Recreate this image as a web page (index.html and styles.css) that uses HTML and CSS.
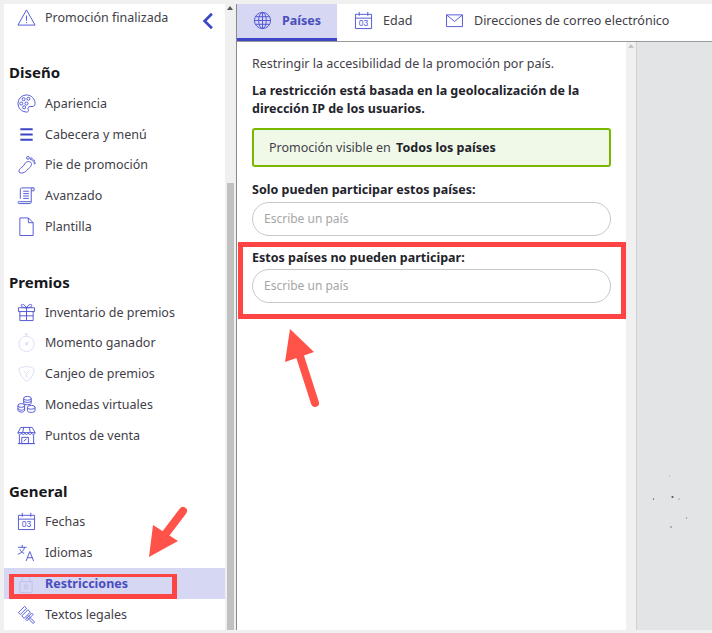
FILE: index.html
```html
<!DOCTYPE html>
<html lang="es">
<head>
<meta charset="utf-8">
<title>Restricciones</title>
<link rel="stylesheet" href="styles.css">
</head>
<body>
<div class="app">
  <aside class="sidebar">
    <nav class="nav">
      <a class="item first">
        <svg class="icon" viewBox="0 0 20 20"><path d="M10 2 1 18h18z"/><path d="M10 8v5.500M10 14.800v1.200"/></svg>
        <span>Promoción finalizada</span>
        <svg class="chevron" viewBox="0 0 10 16"><path d="M8.500 1.500 2 8l6.500 6.500"/></svg>
      </a>
      <h2 class="head head-diseno">Diseño</h2>
      <a class="item"><svg class="icon" viewBox="0 0 20 20"><path d="M10 1a9 9 0 1 0 0 18c2 0 2.500-1.500 1.800-2.800-.8-1.500.2-3 1.900-3H16c2 0 3-1.300 3-3.200C19 5 15 1 10 1z"/><circle cx="7" cy="5.500" r="1.600"/><circle cx="12" cy="5" r="1.600"/><circle cx="4.500" cy="10" r="1.600"/><circle cx="7.500" cy="14" r="1.600"/><circle cx="10" cy="10" r="1.600"/></svg><span>Apariencia</span></a>
      <a class="item"><svg class="icon" viewBox="0 0 20 20"><path class="thick" d="M3.500 4.500h13M3.500 10h13M3.500 15.500h13"/></svg><span>Cabecera y menú</span></a>
      <a class="item"><svg class="icon" viewBox="0 0 20 20"><path d="M11 7c3-.5 5 1 4 4-.8 2.300-3 3-4.500 5-1.500 2-3.500 3-6 3-2.200 0-3.200-1.500-2-3.500C4 13 6 13 7.500 10.500 8.500 8.500 9 7.500 11 7z"/><circle cx="11.500" cy="3" r="1.500"/><circle cx="15" cy="4" r="1.100"/><circle cx="17.500" cy="6" r=".9"/><circle cx="18.500" cy="8.500" r=".8"/></svg><span>Pie de promoción</span></a>
      <a class="item"><svg class="icon" viewBox="0 0 20 20"><path d="M5 2h13v3h-3v11.500H2.500M5 2c-1.200 0-1.500 1-1.500 2v9.500M15 5V3.500C15 2.500 15.500 2 16.500 2M2 18.500h11.500c1 0 1.500-.8 1.500-2M2 18.500c-1 0-1.500-2.500.5-2.500"/><path d="M6.500 5.500h6M6.500 8h6M6.500 10.500h6M6.500 13h6"/></svg><span>Avanzado</span></a>
      <a class="item"><svg class="icon" viewBox="0 0 20 20"><path d="M3 1h9l5 5v13.500H3zM12 1v5h5"/></svg><span>Plantilla</span></a>

      <h2 class="head head-premios">Premios</h2>
      <a class="item"><svg class="icon" viewBox="0 0 20 20"><path d="M1.500 5h17v4h-17zM3 9v9.500h14V9M10 5v13.500M3 13.500h14M10 5C8 1 4 .5 4.500 3c.3 1.500 3 2 5.500 2 2.500 0 5.200-.5 5.500-2C16 .5 12 1 10 5z"/></svg><span>Inventario de premios</span></a>
      <a class="item"><svg class="icon faded" viewBox="0 0 20 20"><circle cx="10" cy="11.500" r="8"/><path d="M8 1h4M10 1v2.500M9 12.500l3.500-4"/><circle cx="10" cy="11.500" r="1.200"/></svg><span>Momento ganador</span></a>
      <a class="item"><svg class="icon faded" viewBox="0 0 20 20"><path d="M2 5c4-3 12-3 16 0-.5 6-3 11-8 13C6 16 3 11 2 5z"/><path d="M7 7l3 3 3-3M10 10v4"/></svg><span>Canjeo de premios</span></a>
      <a class="item"><svg class="icon" viewBox="0 0 20 20"><ellipse cx="11" cy="3.500" rx="4" ry="2"/><path d="M7 3.500v5c0 1 1.800 1.800 4 1.800s4-.8 4-1.800v-5M7 6c0 1 1.800 1.800 4 1.800S15 7 15 6"/><ellipse cx="4.500" cy="11" rx="3.500" ry="2"/><path d="M1 11v5c0 1 1.500 2 3.500 2S8 17 8 16v-5M1 14c0 1 1.500 2 3.500 2S8 15 8 14"/><ellipse cx="15" cy="13" rx="4" ry="2"/><path d="M11 13v3.500c0 1 1.800 1.800 4 1.800s4-.8 4-1.800V13"/></svg><span>Monedas virtuales</span></a>
      <a class="item"><svg class="icon" viewBox="0 0 20 20"><path d="M4 1.500h12l3 5.500H1zM1 7c0 2.500 3.600 2.500 3.600 0 0 2.500 3.600 2.500 3.600 0 0 2.500 3.600 2.500 3.600 0 0 2.500 3.600 2.500 3.600 0 0 2.500 3.600 2.500 3.600 0M2.500 9.500v9h15v-9M1 18.500h18M7 1.500 6 7M13 1.500l1 5.500M5 12h7v6.500H5zM7 16l3-2.500"/></svg><span>Puntos de venta</span></a>

      <h2 class="head head-general">General</h2>
      <a class="item"><svg class="icon" viewBox="0 0 20 20"><path d="M1.500 3.500h17v15h-17zM1.500 7.500h17M5.500 1v4M14.500 1v4"/><text x="10" y="16.300" text-anchor="middle" class="cal-text">03</text></svg><span>Fechas</span></a>
      <a class="item"><svg class="icon" viewBox="0 0 20 20"><path d="M1 4.500h9M5.500 2v2.500M8 4.500c-.7 3.500-3.500 6-7 7.500M3 6.500c.8 2.300 2.500 3.700 4.500 4.500M9.500 19l4-10 4 10M11 15.500h5.500"/></svg><span>Idiomas</span></a>
      <a class="item active"><svg class="icon faded-lock" viewBox="0 0 20 20"><path d="M3 8h13v11.500H3zM5.500 8V5c0-5 8-5 8 0v3"/><path d="M8 11.500h3v4H8z"/></svg><span>Restricciones</span></a>
      <a class="item"><svg class="icon" viewBox="0 0 20 20"><path d="M1.500 8 8 1.500l2 2L3.500 10zM5 11.500 11.500 5l2.500 2.500L7.500 14zM9 15l6.500-6.500 1.500 1.500-6.500 6.500zM11.500 11l7 7-1.500 1.500-7-7"/></svg><span>Textos legales</span></a>
    </nav>
    <div class="scrollbar">
      <div class="arrow"></div>
      <div class="thumb"></div>
    </div>
  </aside>

  <main class="main">
    <div class="tabs">
      <a class="tab tab-active"><svg class="icon" viewBox="0 0 20 20"><circle cx="10" cy="10" r="8.500"/><ellipse cx="10" cy="10" rx="4" ry="8.500"/><path d="M10 1.500v17M1.500 10h17M2.700 6h14.600M2.700 14h14.600"/></svg><span>Países</span></a>
      <a class="tab tab-edad"><svg class="icon" viewBox="0 0 20 20"><path d="M1.500 3.500h17v15h-17zM1.500 7.500h17M5.500 1v4M14.500 1v4"/><text x="10" y="16.300" text-anchor="middle" class="cal-text">03</text></svg><span>Edad</span></a>
      <a class="tab tab-mail"><svg class="icon mail" viewBox="0 0 20 16"><path d="M1.500 2h17v12.500h-17zM1.500 2 10 9l8.500-7"/></svg><span>Direcciones de correo electrónico</span></a>
    </div>
    <div class="body">
      <section class="content">
        <p class="line">Restringir la accesibilidad de la promoción por país.</p>
        <p class="note">La restricción está basada en la geolocalización de la dirección IP de los usuarios.</p>
        <div class="status"><span>Promoción visible en <b>Todos los países</b></span></div>
        <label class="label label-first">Solo pueden participar estos países:</label>
        <div class="input">Escribe un país</div>
        <label class="label label-second">Estos países no pueden participar:</label>
        <div class="input">Escribe un país</div>
      </section>
      <div class="scrollbar inner"><div class="arrow light"></div></div>
      <div class="canvas"></div>
    </div>
  </main>
</div>

<div class="mark mark-form"></div>
<div class="mark mark-nav"></div>
<svg class="annot" viewBox="0 0 712 633">
  <path class="shaft" d="M315 403 298 350"/>
  <path class="head-fill" d="M290 329 285 362 314 352z"/>
  <path class="shaft" d="M183 511 164 536"/>
  <path class="head-fill" d="M149 557 153 525 178 541z"/>
  <g class="specks">
    <circle cx="672.500" cy="497" r="1.100"/><circle cx="653.500" cy="499" r=".7"/><circle cx="679" cy="499" r=".5"/>
    <circle cx="686.500" cy="518" r=".6"/><circle cx="671" cy="527" r=".7"/><circle cx="669.500" cy="476" r=".4"/>
  </g>
</svg>
</body>
</html>
```
FILE: styles.css
```css
* { box-sizing: border-box; }
html, body { margin: 0; height: 100%; }
body {
  width: 712px;
  height: 633px;
  overflow: hidden;
  position: relative;
  background: #f0f0f0;
  font-family: "Noto Sans", sans-serif;
  font-size: 12.5px;
  color: #3f4048;
}
.app {
  display: flex;
  height: 630px;
  padding: 4px 0 0 4px;
}
.sidebar { display: flex; width: 232px; flex: none; }
.nav {
  width: 221px;
  background: #fff;
  display: flex;
  flex-direction: column;
}
.item {
  height: 30.75px;
  flex: none;
  display: flex;
  align-items: center;
  padding-left: 13px;
  gap: 9px;
  position: relative;
}
.item.first { height: 26.5px; margin-bottom: 27.500px; }
.item.active { background: #d5d7f3; color: #4a4dbd; font-weight: 700; }
.icon {
  width: 19px;
  height: 19px;
  flex: none;
  fill: none;
  stroke: #4f55d4;
  stroke-width: 1;
  overflow: visible;
}
.icon .thick { stroke-width: 2; stroke: #3b45c8; }
.icon.faded { stroke: #d9dbf6; }
.icon.faded-lock { stroke: #bfc2ec; }
.chevron {
  position: absolute;
  left: 198px;
  top: 8px;
  width: 12px;
  height: 18px;
  fill: none;
  stroke: #3b48c4;
  stroke-width: 2.400;
}
.head {
  height: 30px;
  flex: none;
  margin: 0;
  padding-left: 5px;
  display: flex;
  align-items: center;
  font-size: 15px;
  font-weight: 700;
  color: #17171c;
}
.head-diseno { padding-bottom: 2px; }
.head-premios { margin-top: 25px; padding-top: 1px; }
.head-general { margin-top: 26px; padding-bottom: 2px; }
.scrollbar {
  width: 11px;
  background: #f0f0f0;
  position: relative;
  flex: none;
}
.arrow {
  position: absolute;
  left: 2px;
  top: 2px;
  border-left: 3.500px solid transparent;
  border-right: 3.500px solid transparent;
  border-bottom: 4px solid #555;
}
.arrow.light { border-bottom-color: #c4c4c4; }
.thumb {
  position: absolute;
  left: 2px;
  top: 179px;
  bottom: 0;
  width: 7px;
  background: #c1c1c1;
}
.main {
  flex: 1;
  display: flex;
  flex-direction: column;
  border-left: 1px solid #8a8a8a;
}
.tabs {
  height: 38px;
  flex: none;
  display: flex;
  background: #fff;
  border-bottom: 1px solid #9a9a9a;
}
.tab {
  display: flex;
  align-items: center;
  height: 37px;
  gap: 10px;
  padding: 0 0 5px 16px;
}
.tab-active {
  width: 100px;
  background: #d5d7f3;
  border-bottom: 3px solid #3d46c9;
  color: #4a4dbd;
  font-weight: 700;
  padding-bottom: 2px;
}
.tab-edad { width: 91px; padding-left: 17px; }
.tab-mail { padding-left: 17px; }
.icon.mail { height: 15px; }
.cal-text { font-size: 9px; fill: #4f55d4; stroke: none; font-family: "Liberation Sans", sans-serif; }
.body { flex: 1; display: flex; min-height: 0; }
.content {
  width: 389px;
  flex: none;
  background: #fff;
  padding: 13px 15px 0;
}
.line { margin: 0; height: 18px; line-height: 18px; }
.note {
  margin: 9px 0 0;
  font-weight: 700;
  color: #23232b;
  line-height: 18px;
}
.status {
  margin-top: 10px;
  height: 39px;
  width: 359px;
  border: 2px solid #7ab800;
  border-radius: 3px;
  background: #f0f8e8;
  display: flex;
  align-items: center;
  padding-left: 15px;
}
.status b { color: #23232b; margin-left: 2px; }
.label {
  display: block;
  font-weight: 700;
  color: #23232b;
  height: 18px;
  line-height: 18px;
  margin-top: 13px;
}
.label-first { margin-top: 14px; }
.input {
  width: 359px;
  height: 34px;
  margin-top: 3px;
  border: 1px solid #c8c8c8;
  border-radius: 17px;
  display: flex;
  align-items: center;
  padding: 0 0 2px 11px;
  color: #a6a6a6;
  font-size: 12px;
}
.label-second + .input { margin-top: 2px; }
.body .scrollbar.inner { border-right: 1px solid #cfd0d2; }
.canvas { flex: 1; background: #e3e4e6; }
.mark {
  position: absolute;
  border: 5px solid #ff4444;
  pointer-events: none;
}
.mark-form { left: 238px; top: 242px; width: 388px; height: 77px; }
.mark-nav { left: 9px; top: 574px; width: 168px; height: 25px; border-top-width: 3px; }
.annot {
  position: absolute;
  left: 0;
  top: 0;
  width: 712px;
  height: 633px;
  pointer-events: none;
}
.shaft { stroke: #ff5349; stroke-width: 8; stroke-linecap: round; fill: none; }
.head-fill { fill: #ff5349; }
.specks { fill: #555; }
```
